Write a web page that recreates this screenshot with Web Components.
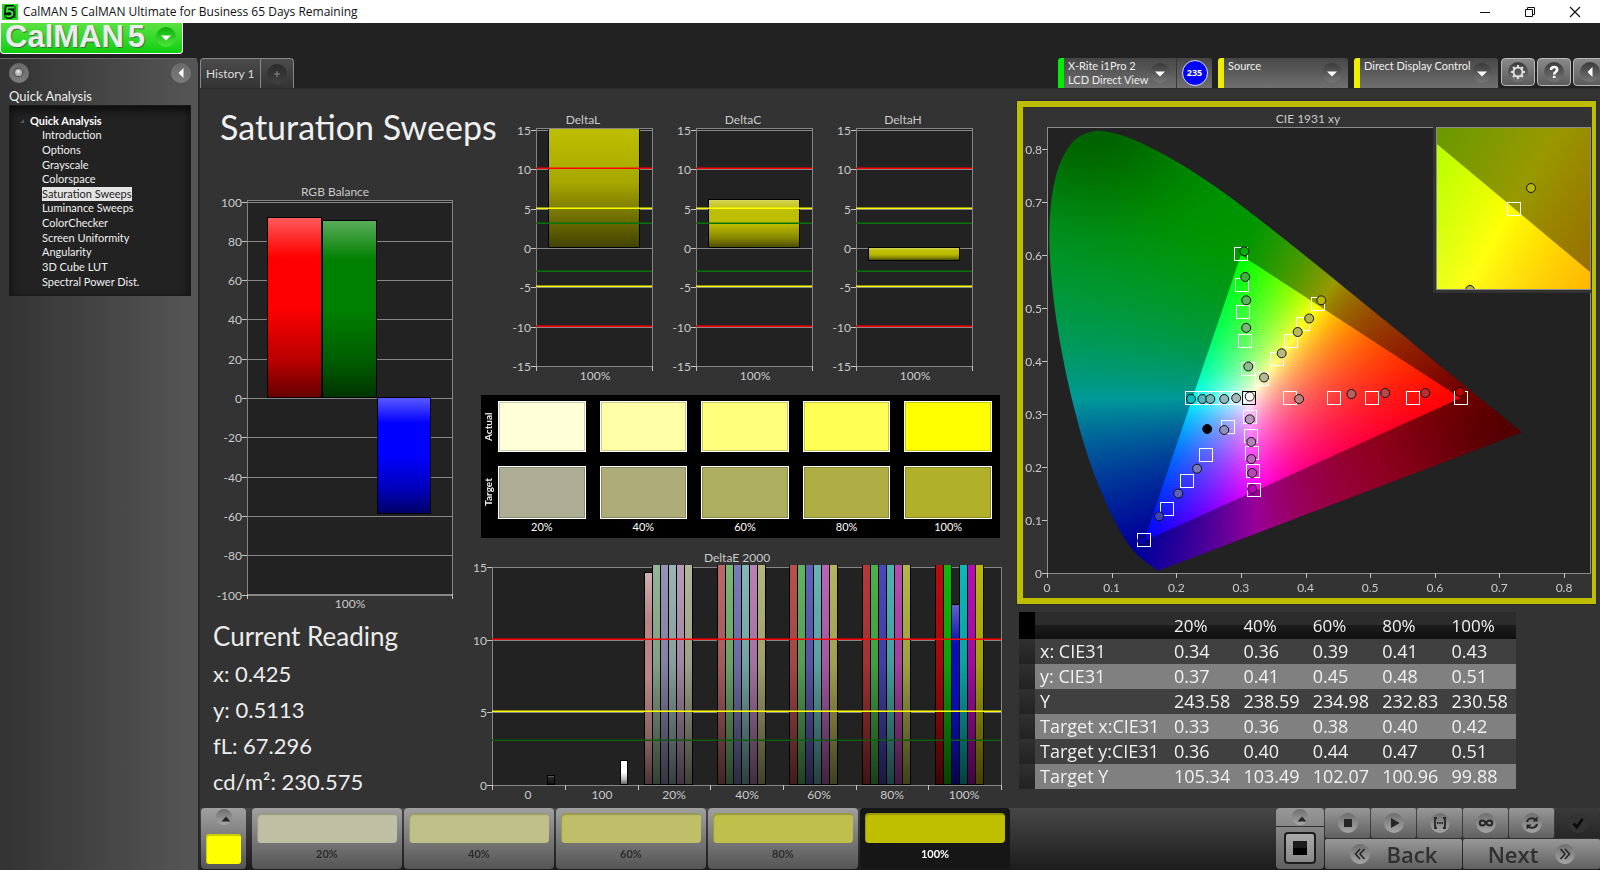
<!DOCTYPE html>
<html lang="en">
<head>
<meta charset="utf-8">
<title>CalMAN 5</title>
<style>
  html, body { margin: 0; background: #222; }
  body { font-family: Lato, "Open Sans", sans-serif; color: #eee; }
</style>
</head>
<body>
<calman-app></calman-app>
<script>
const define = (name, css, html, init) => {
  const tpl = document.createElement('template');
  tpl.innerHTML = `<style>*{box-sizing:border-box}button{font:inherit;color:inherit;margin:0;padding:0;border:0;cursor:pointer}${css}</style>${typeof html === 'string' ? html : ''}`;
  customElements.define(name, class extends HTMLElement {
    constructor() {
      super();
      this.attachShadow({ mode: 'open' });
    }
    connectedCallback() {
      this.shadowRoot.replaceChildren(tpl.content.cloneNode(true));
      if (typeof html === 'function') this.shadowRoot.innerHTML += html(this);
      if (init) init(this, this.shadowRoot);
    }
  });
};

/* ---------- window title ---------- */
define('title-bar', `
  :host{display:flex;align-items:center;height:23px;padding-right:3px;background:#fff;color:#111;font:12px/23px "Open Sans",sans-serif}
  .icon{margin:0 5px 0 2px}
  .text{flex:1}
  button{width:45px;height:23px;background:none;display:grid;place-items:center}
`, `
  <svg class="icon" width="16" height="16" viewBox="0 0 16 16"><rect width="16" height="16" fill="#063c06"/><rect x="1" y="1" width="14" height="14" fill="#0a8a0a" stroke="#1fe01f" stroke-width="2"/><path d="M12 3.500H5.500L5 7.500C8 6.500 11 7.500 10.500 10.200C10 12.500 7 13 4.500 12" fill="none" stroke="#000" stroke-width="5"/><path d="M12 3.500H5.500L5 7.500C8 6.500 11 7.500 10.500 10.200C10 12.500 7 13 4.500 12" fill="none" stroke="#35e835" stroke-width="2"/></svg>
  <span class="text"><slot></slot></span>
  <button aria-label="Minimize"><svg width="12" height="12"><path d="M1 6.500H11" stroke="#111"/></svg></button>
  <button aria-label="Restore"><svg width="12" height="12" fill="none" stroke="#111"><path d="M1.500 3.500H8.500V10.500H1.500ZM3.500 3.500V1.500H10.500V8.500H8.500"/></svg></button>
  <button aria-label="Close"><svg width="12" height="12"><path d="M1 1L11 11M11 1L1 11" stroke="#111" stroke-width="1.200"/></svg></button>
`);

define('round-glyph', `
  :host{display:inline-grid;place-items:center;flex:none;width:20px;height:20px;border-radius:50%;background:linear-gradient(#3a3a3a,#777);color:#fff}
  :host([small]){width:16px;height:16px}
  :host([light]){background:linear-gradient(#6a6a6a,#7c7c7c)}
  :host([pale]){background:linear-gradient(#6e6e6e,#a6a6a6);color:#262626}
  :host([dim]){background:linear-gradient(#2a2a2a,#404040);color:#888}
  :host([dark]){background:#333;color:#0c0c0c}
  :host([green]){background:linear-gradient(#0cae0c,#4fe63a)}
  svg{display:block}
`, el => `<svg width="20" height="20" viewBox="0 0 20 20" fill="none" stroke="currentColor" stroke-width="2">${{
  down: '<path d="M5 8.500H15L10 13.500Z" fill="currentColor" stroke="none"/>',
  up: '<path d="M5.500 12.500H14.500L10 7.500Z" fill="currentColor" stroke="none"/>',
  left: '<path d="M12.500 5V15L7.500 10Z" fill="currentColor" stroke="none"/>',
  plus: '<path d="M10 7V13M7 10H13" stroke-width="1"/>',
  ball: '<circle cx="9.500" cy="9.500" r="5" fill="#5a5a5a" stroke="none"/><circle cx="9.500" cy="9.500" r="3.500" fill="#b8b8b8" stroke="none"/><circle cx="9" cy="8.500" r="1.500" fill="#e8e8e8" stroke="none"/>',
  gear: '<g stroke="#e0e0e0"><circle cx="10" cy="10" r="4.500"/><path d="M10 3V5.500M10 14.500V17M3 10H5.500M14.500 10H17M5 5L6.800 6.800M13.200 13.200L15 15M15 5L13.200 6.800M6.800 13.200L5 15"/></g>',
  help: '<path d="M7 8C7 4 13.200 4 13.200 7.500C13.200 10 10.200 9.500 10.200 12.500M10.200 13.800V16" stroke="#fff" stroke-width="2.600"/>',
  stop: '<path d="M6 6H14V14H6Z" fill="currentColor" stroke="none"/>',
  play: '<path d="M7 5V15L15.500 10Z" fill="currentColor" stroke="none"/>',
  range: '<path d="M7 5H5V15H7M13 5H15V15H13" stroke-width="1.800"/><path d="M7 10H8.500M9.300 10H10.700M11.500 10H13" stroke-width="1.800"/>',
  loop: '<path d="M10 10C8 6.500 3.800 6.800 3.800 10C3.800 13.200 8 13.500 10 10C12 6.500 16.200 6.800 16.200 10C16.200 13.200 12 13.500 10 10Z"/>',
  sync: '<path d="M5 9C5.500 5.500 11 3.500 14 7M15 11C14.500 14.500 9 16.500 6 13"/><path d="M15.500 3.500V8.500H10.500ZM4.500 16.500V11.500H9.500Z" fill="currentColor" stroke="none"/>',
  check: '<path d="M5.500 10.500L8.800 14L14.500 6" stroke-width="3"/>',
  back: '<path d="M10 5L5.500 10L10 15M14.500 5L10 10L14.500 15" stroke-width="1.600"/>',
  next: '<path d="M5.500 5L10 10L5.500 15M10 5L14.500 10L10 15" stroke-width="1.600"/>'
}[el.getAttribute('icon')]}</svg>`);

/* ---------- logo ---------- */
define('brand-logo', `
  :host{display:block;height:35px}
  button{display:flex;align-items:center;justify-content:space-between;width:183px;height:31px;padding:0 6px 3px 4px;border:1px solid #fff;border-top:0;border-radius:0 0 4px 4px;background:linear-gradient(#5be242,#10cf10)}
  span{font:bold 31px/28px "Liberation Sans",sans-serif;color:#ececec;text-shadow:1px 1px 1px #3f6f3f;white-space:nowrap}
  b{margin-left:4px}
`, `<button aria-label="CalMAN 5 menu"><span>CalMAN<b>5</b></span><round-glyph icon="down" green></round-glyph></button>`);

/* ---------- side navigation ---------- */
define('side-nav', `
  :host{display:flex;flex-direction:column;flex:1;padding:4px 7px 0 9px;background:linear-gradient(90deg,#333,#565656);border-top:1px solid #666;border-right:2px solid #262626;border-radius:0 6px 0 0}
  header{display:flex;justify-content:space-between}
  button{background:none;border-radius:50%;height:20px}
  h2{margin:4px 0 0;font:13px/18px Lato,sans-serif}
  nav{height:191px;padding:7px 0 0 10px;background:#222;border:1px solid #1a1a1a;box-shadow:inset 0 4px 8px #0c0c0c}
  h3{display:flex;align-items:center;gap:6px;margin:0;font:bold 11px/15px Lato,sans-serif;color:#fff}
  ul{display:grid;grid-auto-rows:1fr;height:161px;margin:0;padding:0 0 0 22px;list-style:none}
  li{display:flex;align-items:center}
  a{color:#f0f0f0;text-decoration:none;font-size:11px;line-height:14px;white-space:nowrap}
  a[aria-current]{background:#e4e4e4;color:#222}
`, el => `
  <header><button aria-label="Pin"><round-glyph icon="ball" light></round-glyph></button><button aria-label="Collapse"><round-glyph icon="left" light></round-glyph></button></header>
  <h2>Quick Analysis</h2>
  <nav aria-label="Workflow"><h3><svg width="4" height="4"><path d="M4 0V4H0Z" fill="#555"/></svg>Quick Analysis</h3><ul>
  ${['Introduction','Options','Grayscale','Colorspace','Saturation Sweeps','Luminance Sweeps','ColorChecker','Screen Uniformity','Angularity','3D Cube LUT','Spectral Power Dist.']
    .map(t => `<li><a href="#"${t === 'Saturation Sweeps' ? ' aria-current="page"' : ''}>${t}</a></li>`).join('')}
  </ul></nav>`);

/* ---------- top bar ---------- */
define('tab-strip', `
  :host{display:flex;height:30px;border:1px solid #888;border-bottom:0;border-radius:4px 4px 0 0;background:linear-gradient(#4c4c4c,#333)}
  button{background:none;font-size:12px;color:#ddd;padding:0 5px}
  button+button{border-left:1px solid #888;padding:4px 6px 0}
`, `<button role="tab" aria-selected="true">History 1</button><button aria-label="Add tab"><round-glyph icon="plus" dim></round-glyph></button>`);

define('device-tile', `
  :host{display:flex;height:30px;background:linear-gradient(#474747,#707070);border-radius:3px 3px 0 0;border-left:6px solid var(--status,#ee0);overflow:hidden}
  .main{flex:1;display:flex;justify-content:space-between;align-items:center;background:none;text-align:left;padding:0 6px 0 4px}
  .label{align-self:flex-start;font-size:11px;line-height:14px;padding-top:1px;white-space:nowrap}
  ::slotted([slot=extra]){border-left:1px solid #383838}
`, `<button class="main" aria-haspopup="listbox"><span class="label"><slot></slot></span><round-glyph icon="down"></round-glyph></button><slot name="extra"></slot>`);

define('level-badge', `
  :host{display:grid;place-items:center;width:36px}
  span{width:26px;height:26px;border-radius:50%;border:1px solid #dde;background:#00f;color:#fff;font:bold 9px/24px "Open Sans",sans-serif;text-align:center}
`, `<span><slot></slot></span>`);

define('tool-button', `
  :host{display:block}
  button{display:grid;place-items:center;width:34px;height:28px;border:1px solid #b8b8b8;border-radius:4px;background:linear-gradient(#8a8a8a,#5c5c5c)}
`, el => `<button aria-label="${el.getAttribute('icon')}"><round-glyph icon="${el.getAttribute('icon')}"></round-glyph></button>`);

define('top-bar', `
  :host{display:flex;align-items:flex-start;height:65px;padding-top:35px;overflow:hidden}
  .gap{flex:1}
  device-tile{margin-right:6px;flex:none}
  .a{width:154px;--status:#0e0}.b{width:130px}.c{width:144px;margin-right:3px}
  tool-button{margin-right:2px}
  .edge{margin-right:-7px}
`, `<tab-strip></tab-strip><div class="gap"></div>
  <device-tile class="a">X-Rite i1Pro 2<br>LCD Direct View<level-badge slot="extra">235</level-badge></device-tile>
  <device-tile class="b">Source</device-tile>
  <device-tile class="c">Direct Display Control</device-tile>
  <tool-button icon="gear"></tool-button><tool-button icon="help"></tool-button><tool-button class="edge" icon="left"></tool-button>`);

/* ---------- bar charts ---------- */
const olive = '#bebe00';
const delta = (name, bar) => ({
  w: 160, h: 276, title: [78, 16, name], plot: [31, 20, 147, 258], zero: 140, unit: 7.87,
  ticks: [15, 10, 5, 0, -5, -10, -15], bars: [bar],
  limits: [[10, '#f00'], [5, '#ff0'], [3, '#0a720a'], [-3, '#0a720a'], [-5, '#ff0'], [-10, '#f00']],
  xticks: [31, 147], xlabels: [[90, '100%']], ly: 272
});
// Six hues (R, G, B, C, M, Y) for each saturation step.
const sweep = [
  ['#b98484', '#93b593', '#9393b8', '#99b4b4', '#b79ab8', '#b5b59a'],
  ['#b86868', '#78b878', '#7a7ab8', '#85b6b6', '#b882b4', '#b5b57e'],
  ['#b85050', '#60b460', '#6060b8', '#68b4b4', '#b865b4', '#b5b560'],
  ['#b83838', '#48b448', '#4848b8', '#4cb4b4', '#b848b4', '#b5b548'],
  ['#b80c0c', '#0cb80c', '#0c0cb8', '#0cb8b8', '#b80cb4', '#b8b80c']
];
const CHARTS = {
  rgb: {
    w: 270, h: 436, title: [135, 16, 'RGB Balance'], plot: [47, 20, 252, 414], zero: 218, unit: 1.965,
    ticks: [100, 80, 60, 40, 20, 0, -20, -40, -60, -80, -100],
    bars: [[67, 55, 37, 218, '#f00'], [122, 55, 40, 218, '#008000'], [177, 54, 217, 334, '#00f']],
    limits: [], xticks: [47, 252], xlabels: [[150, '100%']], ly: 428
  },
  deltaL: delta('DeltaL', [43, 92, 21, 140, olive, true]),
  deltaC: delta('DeltaC', [43, 92, 91, 140, olive]),
  deltaH: delta('DeltaH', [43, 92, 139, 153, olive]),
  deltaE: {
    w: 540, h: 255, title: [267, 17, 'DeltaE 2000'], plot: [22, 22, 531, 240], zero: 240, unit: 14.53,
    ticks: [15, 10, 5, 0],
    bars: [[77, 8, 230, 240, '#222'], [150, 8, 215, 240, '#fff'],
      ...sweep.flatMap((g, i) => g.map((c, j) => {
        const top = i === 0 && j === 0 ? 27 : i === 4 && j === 2 ? 59 : 20;
        return [174 + Math.round(i * 72.7) + j * 8, 9, top, 240, c, top === 20];
      }))],
    limits: [[10, '#f00'], [5, '#ff0'], [3, '#0c5c0c']],
    xticks: [22, 95, 168, 240, 313, 386, 458, 531],
    xlabels: [[58, '0'], [132, '100'], [204, '20%'], [277, '40%'], [349, '60%'], [422, '80%'], [494, '100%']], ly: 254
  }
};

define('bar-chart', `
  :host{display:block}
  svg{display:block;width:100%;height:auto;overflow:visible;font:12px Lato,sans-serif;fill:#cacaca}
  .l{shape-rendering:crispEdges;fill:none;stroke:#868686;stroke-width:1}
  .t{stroke:#c4c4c4}
`, el => {
  const c = CHARTS[el.getAttribute('name')];
  const [x0, y0, x1, y1] = c.plot;
  const Y = v => Math.round(c.zero - v * c.unit);
  const bar = ([x, w, a, b, col, cut]) => {
    const top = cut ? a : a + 1;
    const box = `x="${x + 1}" y="${top}" width="${w - 2}" height="${b - 1 - top}"`;
    return `<rect x="${x}" y="${a}" width="${w}" height="${b - a}" fill="#000"/><rect ${box} fill="${col}"/><rect ${box} fill="url(#${cut ? 'cut' : 'full'})"/>`;
  };
  return `
  <svg viewBox="0 0 ${c.w} ${c.h}" role="img" aria-label="${c.title[2]}">
    <defs>
      <linearGradient id="full" x2="0" y2="1"><stop offset="0" stop-color="#fff" stop-opacity=".35"/><stop offset=".22" stop-color="#fff" stop-opacity="0"/><stop offset=".5" stop-color="#000" stop-opacity="0"/><stop offset=".8" stop-color="#000" stop-opacity=".28"/><stop offset="1" stop-color="#000" stop-opacity=".6"/></linearGradient>
      <linearGradient id="cut" x2="0" y2="1"><stop offset="0" stop-opacity="0"/><stop offset=".45" stop-opacity=".12"/><stop offset="1" stop-opacity=".65"/></linearGradient>
    </defs>
    <rect x="${x0}" y="${y0}" width="${x1 - x0}" height="${y1 - y0}" fill="#222"/>
    ${c.ticks.map(v => `<path class="l" d="M${x0} ${Y(v) + .5}H${x1}"/><path class="l t" d="M${x0 - 5} ${Y(v) + .5}H${x0}"/><text x="${x0 - 5}" y="${Y(v) + 5}" text-anchor="end">${v}</text>`).join('')}
    <rect class="l" x="${x0 + .5}" y="${y0 + .5}" width="${x1 - x0}" height="${y1 - y0}"/>
    ${c.bars.map(bar).join('')}
    ${c.limits.map(([v, col]) => `<path d="M${x0} ${Y(v) - .5}H${x1}" class="l" style="stroke:${col}"/><path d="M${x0} ${Y(v) - 1.5}H${x1}" class="l" style="stroke:${col};opacity:.5"/>`).join('')}
    ${c.xticks.map(x => `<path class="l t" d="M${x + .5} ${y1}V${y1 + 5}"/>`).join('')}
    ${c.xlabels.map(([x, t]) => `<text x="${x}" y="${c.ly}" text-anchor="middle">${t}</text>`).join('')}
    <text x="${c.title[0]}" y="${c.title[1]}" text-anchor="middle">${c.title[2]}</text>
  </svg>`;
});

/* ---------- actual / target swatches ---------- */
define('swatch-panel', `
  :host{display:grid;grid-template:51px 53px 14px/17px 1fr;row-gap:14px;padding:6px 8px 0 0;height:143px;background:#000}
  .r{display:grid;grid-template-columns:repeat(5,1fr);gap:14px}
  i{border:1px solid #fff;box-shadow:inset 0 0 0 1px #0003}
  .v{writing-mode:vertical-rl;transform:rotate(180deg);font:bold 10px/15px Lato,sans-serif;text-align:center}
  .p{grid-column:2;font-size:11px;line-height:14px;text-align:center;color:#fff;margin-top:-13px}
`, `<span class="v">Actual</span><div class="r">${['#ffffd8','#ffffa8','#ffff7c','#ffff54','#ff0'].map(c => `<i style="background:${c}"></i>`).join('')}</div>
  <span class="v">Target</span><div class="r">${['#aeae94','#aeac78','#aeae60','#aeae44','#b0b02a'].map(c => `<i style="background:${c}"></i>`).join('')}</div>
  <div class="r p">${['20%','40%','60%','80%','100%'].map(t => `<span>${t}</span>`).join('')}</div>`);

/* ---------- CIE 1931 chromaticity ---------- */
const LOCUS = [[.1741,.005],[.1714,.0051],[.1644,.0109],[.1566,.0177],[.144,.0297],[.1355,.0399],[.1241,.0578],[.1096,.0868],[.0913,.1327],[.0687,.2007],[.0454,.295],[.0235,.4127],[.0082,.5384],[.0039,.6548],[.0139,.7502],[.0389,.812],[.0743,.8338],[.1142,.8262],[.1547,.8059],[.1929,.7816],[.2296,.7543],[.2658,.7243],[.3016,.6923],[.3731,.6245],[.4441,.5547],[.5125,.4866],[.5752,.4242],[.627,.3725],[.6658,.334],[.6915,.3083],[.719,.2809],[.7347,.2653]];
const GAMUT = [[.64, .33], [.3, .6], [.15, .06]];
const TARGETS = [[.3,.602],[.3015,.543],[.304,.492],[.3067,.437],[.3105,.385],[.64,.33],[.567,.33],[.5024,.33],[.4441,.33],[.3754,.33],[.1495,.0617],[.185,.1208],[.216,.173],[.246,.2226],[.2794,.2764],[.4197,.5075],[.3964,.469],[.377,.437],[.3562,.4032],[.333,.3667],[.2957,.33],[.2771,.33],[.2607,.33],[.2451,.33],[.2241,.33],[.3207,.1566],[.319,.1925],[.3169,.2264],[.3152,.2585],[.3135,.2943]];
const READINGS = [[.3053,.607,'#00b000'],[.3067,.5585,'#3cb43c'],[.3082,.5145,'#5cb45c'],[.3082,.4626,'#78b878'],[.3115,.3896,'#90b890'],[.6389,.3415,'#c00000'],[.5853,.3396,'#b83030'],[.5233,.3396,'#b84848'],[.471,.3377,'#b86060'],[.39,.3283,'#c08080'],[.1472,.061,'#0000b0'],[.1734,.107,'#4040b8'],[.2031,.15,'#6060b8'],[.2322,.1968,'#7878b8'],[.2742,.2698,'#9090b8'],[.4244,.5145,'#b8b800'],[.4057,.4802,'#b8b848'],[.3879,.4547,'#b8b860'],[.3631,.4145,'#b8b880'],[.3358,.3689,'#b8b898'],[.2229,.3283,'#00c0c0'],[.2404,.3283,'#50b8b8'],[.2527,.3283,'#70b8b8'],[.2742,.3283,'#90b8b8'],[.2927,.33,'#a8b8b8'],[.3175,.1585,'#b800b8'],[.3175,.1887,'#b848b8'],[.3161,.215,'#b868b8'],[.3161,.2472,'#b880b8'],[.3137,.29,'#b898b8'],[.2479,.2717,'#000']];

// Linear RGB of a chromaticity, scaled so that its largest channel is full.
const chroma = (x, y) => {
  const z = 1 - x - y;
  const c = [3.2406*x - 1.5372*y - .4986*z, -.9689*x + 1.8758*y + .0415*z, .0557*x - .204*y + 1.057*z].map(v => Math.max(0, v));
  const m = Math.max(...c) || 1;
  return c.map(v => v / m * 255);
};
function paintGamut(cv, X, Y, invX, invY) {
  const w = cv.width, h = cv.height, g = cv.getContext('2d');
  const layer = dark => {
    const o = document.createElement('canvas'); o.width = w; o.height = h;
    const og = o.getContext('2d'), im = og.createImageData(w, h);
    for (let j = 0; j < h; j++) for (let i = 0; i < w; i++) {
      const x = invX(i + .5), y = invY(j + .5), c = chroma(x, y);
      let k = 1;
      if (dark) {
        const top = Math.hypot(x - .07, y - .85), red = Math.hypot(x - .74, y - .26);
        k = .6 - .22 * Math.exp(-(top * top) / .03) - .28 * Math.exp(-(red * red) / .03);
      }
      const p = (j * w + i) * 4;
      im.data[p] = c[0] * k; im.data[p + 1] = c[1] * k; im.data[p + 2] = c[2] * k; im.data[p + 3] = 255;
    }
    og.putImageData(im, 0, 0);
    return o;
  };
  const P = LOCUS.map(([x, y]) => [X(x), Y(y)]), n = P.length;
  g.save(); g.beginPath(); g.moveTo(...P[0]);
  for (let i = 0; i < n - 1; i++) {
    const a = P[Math.max(0, i - 1)], b = P[i], c = P[i + 1], d = P[Math.min(n - 1, i + 2)];
    g.bezierCurveTo(b[0] + (c[0]-a[0])/6, b[1] + (c[1]-a[1])/6, c[0] - (d[0]-b[0])/6, c[1] - (d[1]-b[1])/6, c[0], c[1]);
  }
  g.closePath(); g.clip(); g.drawImage(layer(true), 0, 0); g.restore();
  g.save(); g.beginPath(); GAMUT.forEach(([x, y]) => g.lineTo(X(x), Y(y))); g.closePath(); g.clip();
  g.drawImage(layer(false), 0, 0); g.restore();
}
define('cie-chart', `
  :host{display:block;border:solid #bebe00;border-width:6px 4px 6px 6px;outline:1px solid #2a2a2a}
  svg{display:block;width:100%;height:auto;font:12px Lato,sans-serif;fill:#cacaca}
  .l{shape-rendering:crispEdges;fill:none;stroke:#8c8c8c}
  .t{stroke:#c4c4c4}
  canvas{display:block;width:100%;height:100%}
`, el => {
  const X = x => 24 + x * 646.3, Y = y => 466 - y * 530, r = Math.round;
  const sq = (x, y, c = '#fff') => `<rect x="${r(x) - 6.5}" y="${r(y) - 6.5}" width="13" height="13" fill="none" stroke="${c}"/>`;
  const dot = (x, y, c) => `<circle cx="${x}" cy="${y}" r="4.500" fill="${c}" stroke="#111"/>`;
  return `
  <svg viewBox="0 0 569 491" role="img" aria-label="CIE 1931 xy">
    <text x="285" y="16" text-anchor="middle">CIE 1931 xy</text>
    <rect x="24" y="20" width="543" height="446" fill="#222"/>
    <foreignObject x="24" y="20" width="543" height="446"><canvas id="main" width="543" height="446"></canvas></foreignObject>
    <rect class="l" x="24.500" y="20.500" width="543" height="446"/>
    ${[0,1,2,3,4,5,6,7,8].map(i => `<path class="l t" d="M${r(X(i/10)) + .5} 466V471M19 ${r(Y(i/10)) + .5}H24"/><text x="${X(i/10)}" y="485" text-anchor="middle">${i ? '0.' + i : 0}</text><text x="19" y="${r(Y(i/10)) + 5}" text-anchor="end">${i ? '0.' + i : 0}</text>`).join('')}
    ${TARGETS.map(([x, y]) => sq(X(x), Y(y))).join('')}${sq(X(.312), Y(.33), '#000')}
    ${READINGS.map(([x, y, c]) => dot(X(x), Y(y), c)).join('')}${dot(X(.3137), Y(.333), '#fff')}
    <rect x="410" y="20" width="159" height="166" fill="#333"/>
    <svg x="413" y="20" width="155" height="163" viewBox="0 0 155 163" style="width:155px;height:163px">
      <foreignObject width="155" height="163"><canvas id="inset" width="155" height="163"></canvas></foreignObject>
      ${sq(78, 82)}${dot(95, 61, '#b8b800')}${dot(34, 163, '#b8b848')}
      <rect class="l" x=".5" y=".5" width="154" height="162"/>
    </svg>
  </svg>`;
}, (el, root) => {
  paintGamut(root.querySelector('#main'), x => x * 646.3, y => 446 - y * 530, i => i / 646.3, j => (446 - j) / 530);
  paintGamut(root.querySelector('#inset'), x => 77 + (x - .4195) * 3080, y => 81 - (y - .505) * 3240, i => .4195 + (i - 77) / 3080, j => .505 - (j - 81) / 3240);
});

/* ---------- readings ---------- */
define('current-reading', `
  :host{display:block;padding:0 13px;color:#ececec;white-space:nowrap}
  h2{margin:0;font:26px/40px Lato,sans-serif}
  p{margin:0;font-size:22px;line-height:36px}
`, `<h2>Current Reading</h2><p>x: 0.425</p><p>y: 0.5113</p><p>fL: 67.296</p><p>cd/m²: 230.575</p>`);

const ROWS = [['x: CIE31','0.34','0.36','0.39','0.41','0.43'],['y: CIE31','0.37','0.41','0.45','0.48','0.51'],['Y','243.58','238.59','234.98','232.83','230.58'],['Target x:CIE31','0.33','0.36','0.38','0.40','0.42'],['Target y:CIE31','0.36','0.40','0.44','0.47','0.51'],['Target Y','105.34','103.49','102.07','100.96','99.88']];
define('data-grid', `
  :host{display:block}
  table{border-collapse:collapse;table-layout:fixed;width:497px;font:18px/25px "Open Sans",sans-serif;color:#f0f0f0}
  th,td{padding:0 0 0 5px;height:25px;text-align:left;font-weight:400;white-space:nowrap}
  tr{background:#404040}
  tr:nth-child(even){background:#808080}
  thead tr{background:linear-gradient(#2c2c2c 48%,#1c1c1c 48%,#101010)}
  thead th{height:27px;font-size:17px}
  .m{width:16px;background:linear-gradient(#303030,#222);padding:0}
  thead .m{background:#000}
  .n{width:134px}
`, `<table><thead><tr><td class="m"></td><td class="n"></td>${['20%','40%','60%','80%','100%'].map(t => `<th scope="col">${t}</th>`).join('')}</tr></thead><tbody>
${ROWS.map(([h, ...v]) => `<tr><td class="m"></td><th scope="row">${h}</th>${v.map(t => `<td>${t}</td>`).join('')}</tr>`).join('')}</tbody></table>`);

/* ---------- bottom bar ---------- */
define('pattern-button', `
  :host{display:block;width:150px}
  button{display:flex;flex-direction:column;width:100%;height:61px;padding:5px;border-radius:4px;background:linear-gradient(#a0a0a0,#555);font:bold 11px/20px Lato,sans-serif;color:#2c2c2c;text-align:center}
  i{display:block;width:100%;height:36px;border-radius:4px;background:var(--c);box-shadow:inset 1px 2px 1px #0003;margin-bottom:1px}
  span{width:100%}
  :host([selected]) button{background:#161616;color:#fff}
`, `<button><i></i><span><slot></slot></span></button>`);

define('transport-bar', `
  :host{display:grid;grid-template-columns:48px repeat(6,45px);grid-template-rows:30px 30px;gap:1px;width:324px}
  button{display:flex;align-items:center;justify-content:center;background:linear-gradient(#989898,#606060);border-radius:2px}
  .src{grid-row:1/3;flex-direction:column;border-radius:4px}
  .src span{flex:1;display:grid;place-items:center;width:100%;border-top:1px solid #333}
  .src round-glyph{margin:1px 0}
  .src i{display:grid;place-items:center;width:32px;height:32px;border:2px solid #1c1c1c;border-radius:4px;background:linear-gradient(#aaa,#888)}
  .src i::after{content:"";width:14px;height:14px;background:linear-gradient(#1c1c1c 50%,#000 50%)}
  .off{background:linear-gradient(#3a3a3a,#262626)}
  .wide{grid-column:span 3;font:600 22px/28px "Open Sans",sans-serif;color:#303030;gap:17px}
`, `<button class="src" aria-label="Pattern source"><round-glyph icon="up" small pale></round-glyph><span><i></i></span></button>
  ${['stop','play','range','loop','sync'].map(i => `<button aria-label="${i}"><round-glyph icon="${i}" pale></round-glyph></button>`).join('')}
  <button class="off" aria-label="check" disabled><round-glyph icon="check" dark></round-glyph></button>
  <button class="wide"><round-glyph icon="back" pale></round-glyph>Back</button><button class="wide">Next<round-glyph icon="next" pale></round-glyph></button>`);

define('bottom-bar', `
  :host{display:flex;height:62px;padding:0 0 1px 1px;background:linear-gradient(#474747,#1c1c1c)}
  .cur{display:flex;flex-direction:column;align-items:center;justify-content:space-between;width:45px;height:61px;margin-right:6px;padding:1px 0 5px;border-radius:4px;background:linear-gradient(#a0a0a0,#555)}
  .cur i{width:35px;height:30px;border-radius:3px;background:#ff0;box-shadow:inset 1px 2px 1px #0003}
  .list{display:flex;gap:2px;flex:1}
`, `<button class="cur" aria-label="Current colour"><round-glyph icon="up" small pale></round-glyph><i></i></button>
  <div class="list">
    <pattern-button style="--c:#bfbfa3">20%</pattern-button><pattern-button style="--c:#bfbf88">40%</pattern-button><pattern-button style="--c:#bfbf6a">60%</pattern-button><pattern-button style="--c:#bfbf4c">80%</pattern-button><pattern-button selected style="--c:#bfbf00">100%</pattern-button>
  </div><transport-bar></transport-bar>`);

/* ---------- page ---------- */
define('calman-app', `
  :host{display:flex;flex-direction:column;min-height:100vh;overflow:hidden;background:#222}
  .work{flex:1;display:grid;grid-template-columns:200px minmax(0,1fr)}
  .left,.right{display:flex;flex-direction:column}
  main{flex:1;display:grid;grid-template-columns:minmax(0,270fr) minmax(0,540fr) minmax(0,590fr);align-items:start;background:#333;border-top:1px solid #2a2a2a}
  h1{margin:17px 0 0 20px;font:34px/42px Lato,sans-serif;white-space:nowrap;height:74px;color:#f0f0f0}
  .deltas{display:grid;grid-template-columns:repeat(3,1fr);margin:19px 25px 11px 35px}
  swatch-panel{margin:0 10px 7px 11px}
  cie-chart{margin:12px 4px 8px 7px}
  data-grid{margin-left:9px}
`, `<title-bar>CalMAN 5 CalMAN Ultimate for Business 65 Days Remaining</title-bar>
  <div class="work">
    <div class="left"><brand-logo></brand-logo><side-nav></side-nav></div>
    <div class="right"><top-bar></top-bar>
      <main>
        <section><h1>Saturation Sweeps</h1><bar-chart name="rgb"></bar-chart><current-reading></current-reading></section>
        <section><div class="deltas"><bar-chart name="deltaL"></bar-chart><bar-chart name="deltaC"></bar-chart><bar-chart name="deltaH"></bar-chart></div>
          <swatch-panel></swatch-panel><bar-chart name="deltaE"></bar-chart></section>
        <section><cie-chart></cie-chart><data-grid></data-grid></section>
      </main>
      <bottom-bar></bottom-bar></div>
  </div>`);
</script>
</body>
</html>
